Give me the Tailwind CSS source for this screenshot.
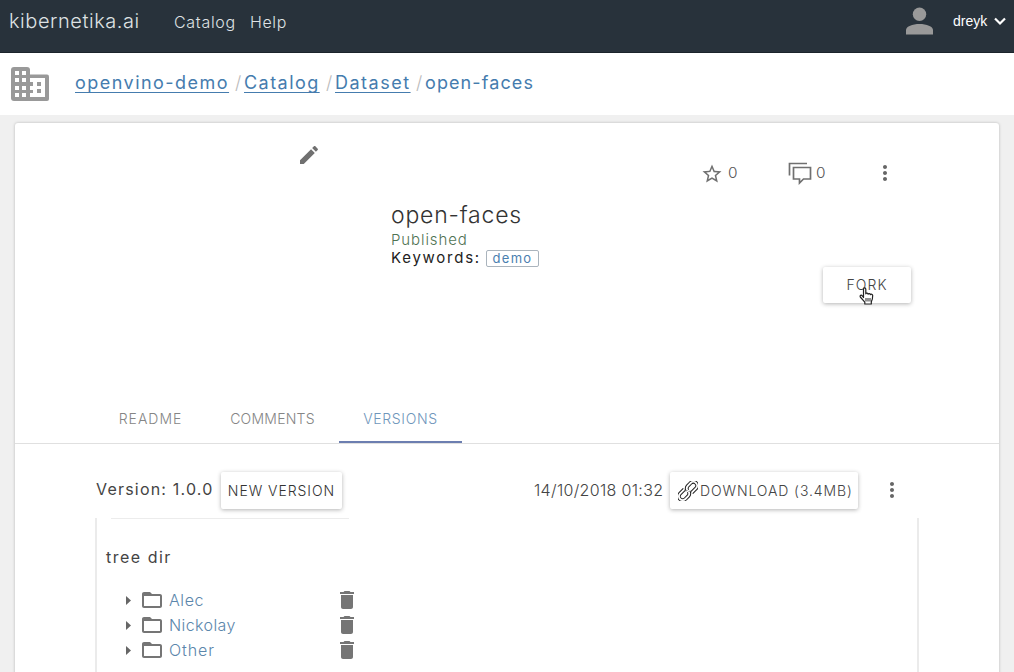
<!DOCTYPE html>
<html lang="en">
<head>
<meta charset="utf-8">
<title>kibernetika.ai</title>
<script src="https://cdn.jsdelivr.net/npm/@tailwindcss/browser@4"></script>
</head>
<body class="w-[1014px] h-[672px] overflow-hidden bg-[#f0f0f0] font-['Inter','Open_Sans',sans-serif] font-light text-[#444] whitespace-nowrap">
<svg class="hidden">
  <symbol id="dots" viewBox="0 0 24 24"><path d="M12 8c1.1 0 2-.9 2-2s-.9-2-2-2-2 .9-2 2 .9 2 2 2zm0 2c-1.1 0-2 .9-2 2s.9 2 2 2 2-.9 2-2-.9-2-2-2zm0 6c-1.1 0-2 .9-2 2s.9 2 2 2 2-.9 2-2-.9-2-2-2z"/></symbol>
  <symbol id="folder" viewBox="0 0 24 24"><path d="M20 6h-8l-2-2H4c-1.100 0-2 .9-2 2v12c0 1.100.9 2 2 2h16c1.100 0 2-.9 2-2V8c0-1.100-.9-2-2-2zm0 12H4V8h16v10z"/></symbol>
  <symbol id="trash" viewBox="0 0 24 24"><path d="M6 19c0 1.100.9 2 2 2h8c1.100 0 2-.9 2-2V7H6v12zM19 4h-3.500l-1-1h-5l-1 1H5v2h14V4z"/></symbol>
</svg>

<nav class="flex h-[53px] border-b border-[#1b242b] bg-[#28323b] text-[#dfe2e4]">
  <div class="ml-[9px] mt-[7px] w-[165px] text-[20px] leading-[28px] tracking-[0.55px]">kibernetika.ai</div>
  <div class="mt-[8px] w-[76px] text-[16px] leading-[28px] tracking-[0.7px]">Catalog</div>
  <div class="mt-[8px] text-[16px] leading-[28px] tracking-[0.6px]">Help</div>
  <div class="ml-auto flex">
    <svg class="mt-[7px] mr-[20px] h-[28px] w-[27px] fill-[#999]" viewBox="0 0 27 28"><circle cx="13.500" cy="7.300" r="6.700"/><path d="M0 27.500V23C0 19.500 6.500 17 13.500 17S27 19.500 27 23v4.500z"/></svg>
    <span class="mt-[7px] w-[41px] font-['Liberation_Sans',sans-serif] text-[14px] leading-[28px] font-normal text-white">dreyk</span>
    <svg class="mt-[17px] mr-[8px] h-[9px] w-[12px] fill-none stroke-white" viewBox="0 0 12 9" stroke-width="2.200"><path d="M1 1.500l5 5 5-5"/></svg>
  </div>
</nav>

<header class="flex h-[62px] bg-white">
  <svg class="ml-[11px] mt-[14px] h-[34px] w-[38px]" viewBox="0 0 38 34">
    <rect x="0" y="0" width="19" height="34" rx="3" fill="#999"/><rect x="14" y="7.500" width="24" height="26.500" rx="2" fill="#999"/>
    <path fill="#fff" d="M4 4h4v4H4zM11 4h4v4h-4zM4 11h4v4H4zM11 11h4v4h-4zM4 19h4v4H4zM11 19h4v4h-4zM4 26h4v4H4zM11 26h4v4h-4zM19 11h15v19H19v-4h3v-3h-3v-4h3v-4h-3z"/>
    <path fill="#999" d="M26 15h4v4h-4zM26 22h4v4h-4z"/>
  </svg>
  <div class="ml-[26px] mt-[17px] flex text-[18px] leading-[26px] font-normal text-[#457cae]">
    <a class="w-[160px] tracking-[1.47px] underline decoration-1 underline-offset-[3px] [text-decoration-skip-ink:none]">openvino-demo</a><span class="w-[9px] font-light text-[#bbb]">/</span>
    <a class="w-[82px] tracking-[1.45px] underline decoration-1 underline-offset-[3px] [text-decoration-skip-ink:none]">Catalog</a><span class="w-[9px] font-light text-[#bbb]">/</span>
    <a class="w-[81px] tracking-[1.5px] underline decoration-1 underline-offset-[3px]">Dataset</a><span class="w-[9px] font-light text-[#bbb]">/</span>
    <span class="tracking-[1.1px]">open-faces</span>
  </div>
</header>

<main class="mt-[8px] ml-[15px] h-[560px] w-[984px] rounded-t-[3px] bg-white shadow-[0_0_3px_rgba(0,0,0,0.25)]">
  <div class="flex h-[273px]">
    <div class="w-[376px] pt-[20px] pl-[282px]">
      <svg class="h-[24px] w-[24px] fill-[#707070]" viewBox="0 0 24 24"><path d="M3 17.250V21h3.750L17.810 9.940l-3.750-3.750L3 17.250zM20.710 7.040c.39-.39.39-1.020 0-1.410l-2.340-2.340c-.39-.39-1.020-.39-1.410 0l-1.830 1.830 3.750 3.750 1.830-1.830z"/></svg>
    </div>
    <div class="w-[308px] pt-[77px]">
      <h1 class="text-[23px] leading-[30px] tracking-[0.8px] text-[#333]">open-faces</h1>
      <p class="text-[15px] leading-[19px] tracking-[0.9px] text-[#4f7353]">Published</p>
      <div class="flex h-[18px] items-center text-[#222]">
        <span class="w-[95px] text-[15px] leading-[18px] font-normal tracking-[1.75px]">Keywords:</span>
        <span class="flex h-[17px] w-[53px] items-center justify-center rounded-[2px] border border-[#aab4bd] pt-[1px] text-[13px] font-normal tracking-[1.3px] text-[#4a80b0]">demo</span>
      </div>
    </div>
    <div class="w-[300px]">
      <div class="flex pt-[38px] text-[14px] leading-[24px] text-[#555]">
        <svg class="ml-[1px] h-[24px] w-[24px] fill-[#707070]" viewBox="0 0 24 24"><path transform="translate(.6 1.500) scale(.95)" d="M22 9.240l-7.190-.62L12 2 9.190 8.630 2 9.240l5.460 4.730L5.820 21 12 17.270 18.180 21l-1.630-7.030L22 9.240zM12 15.400l-3.760 2.270 1-4.280-3.320-2.880 4.380-.38L12 6.100l1.710 4.040 4.380.38-3.320 2.880 1 4.280L12 15.400z"/></svg>
        <span class="ml-[4px] w-[60px]"><span class="inline-block origin-left scale-x-110">0</span></span>
        <svg class="h-[24px] w-[24px] fill-none stroke-[#707070]" viewBox="0 0 24 24" stroke-width="1.700"><path d="M1.500 14.500V2.500H19M5.500 6.500h17v11.500h-7l-4 4v-4h-6z"/></svg>
        <span class="ml-[4px] w-[56px]"><span class="inline-block origin-left scale-x-110">0</span></span>
        <svg class="ml-[1px] h-[24px] w-[24px] fill-[#666]"><use href="#dots"/></svg>
      </div>
      <button class="relative mt-[82px] ml-[124px] block h-[36px] w-[88px] rounded-[2px] bg-white text-[14px] leading-[36px] font-light tracking-[1.1px] text-[#444] shadow-[0_1px_4px_rgba(0,0,0,0.3)]">FORK
        <svg class="absolute top-[20px] left-[36px] h-[18px] w-[16px]" viewBox="0 0 16 18"><path fill="#fff" stroke="#222" stroke-width="1.200" stroke-linejoin="round" d="M4.500 10.500V2.300c0-1.800 2.300-1.800 2.300 0v4.500c.4-1 2.200-.8 2.300.4.500-1 2.200-.7 2.300.5.700-.9 2.300-.4 2.300.9 0 3.500-.3 4.500-1.400 6.200V17H5.800v-1.900L1.300 10c-.8-1.600 1-2.400 2-1.100z"/><path stroke="#222" d="M7 11v3.500M9 11v3.500M11 11v3.500"/></svg>
      </button>
    </div>
  </div>

  <div class="flex h-[48px] border-b border-[#e0e0e0] pl-[80px] text-[14px] leading-[46px] text-[#858585]">
    <div class="w-[111px] text-center tracking-[1px]">README</div>
    <div class="w-[133px] text-center tracking-[0.25px]">COMMENTS</div>
    <div class="h-[47px] w-[123px] border-b-[2px] border-[#6c7eb0] text-center tracking-[0.65px] text-[#6f96bb]">VERSIONS</div>
  </div>

  <div class="flex pt-[28px] pl-[81px]">
    <div class="mt-[4px] w-[125px] text-[16px] leading-[26px] font-normal tracking-[1.2px] text-[#444]">Version: 1.0.0</div>
    <div class="h-[37px] w-[121px] rounded-[2px] bg-white text-center text-[14px] leading-[37px] tracking-[0.95px] text-[#333] shadow-[0_1px_4px_rgba(0,0,0,0.3)]">NEW VERSION</div>
    <div class="mt-[5px] ml-[192px] w-[136px] text-[16px] leading-[26px] tracking-[0.32px]">14/10/2018 01:32</div>
    <div class="flex h-[37px] w-[188px] items-center rounded-[2px] bg-white pl-[8px] text-[14px] leading-[37px] shadow-[0_1px_4px_rgba(0,0,0,0.3)]">
      <svg class="h-[20px] w-[20px] fill-none stroke-[#222]" viewBox="0 0 20 20"><g transform="rotate(-45 10 10)" stroke-width="3.800"><path d="M10.500 6.200H4.500a3.800 3.800 0 0 0 0 7.600H8.500a3.800 3.800 0 0 0 3.500-3" transform="translate(-2 0)"/><path d="M9.500 13.800h6a3.800 3.800 0 0 0 0-7.600h-4a3.800 3.800 0 0 0-3.500 3" transform="translate(2 0)"/><g stroke="#fff" stroke-width="1.800"><path d="M10.500 6.200H4.500a3.800 3.800 0 0 0 0 7.600H8.500a3.800 3.800 0 0 0 3.500-3" transform="translate(-2 0)"/><path d="M9.500 13.800h6a3.800 3.800 0 0 0 0-7.600h-4a3.800 3.800 0 0 0-3.500 3" transform="translate(2 0)"/></g></g></svg>
      <span class="ml-[2px] tracking-[0.9px]">DOWNLOAD (3.4MB)</span>
    </div>
    <svg class="mt-[6px] ml-[22px] h-[24px] w-[24px] fill-[#666]"><use href="#dots"/></svg>
  </div>

  <div class="mt-[9px] ml-[80px] h-[160px] w-[824px] border-x-2 border-[#ebebeb] pl-[9px]">
    <div class="ml-[5px] h-px w-[238px] bg-[#ececec]"></div>
    <h2 class="mt-[25px] h-[43px] text-[16px] leading-[26px] font-normal tracking-[1.5px] text-[#444]">tree dir</h2>
    <ul class="text-[16px] leading-[27px] text-[#5b86ab]">
      <li class="flex h-[25px] items-center pl-[20px]"><svg class="mt-[1px] h-[9px] w-[5px] fill-[#666]" viewBox="0 0 5 9"><path d="M0 0l5 4.500L0 9z"/></svg><svg class="ml-[9px] h-[24px] w-[24px] fill-[#757575]"><use href="#folder"/></svg><span class="ml-[5px] w-[166px] pt-[2px] tracking-[0.6px]">Alec</span><svg class="h-[24px] w-[24px] fill-[#757575]"><use href="#trash"/></svg></li>
      <li class="flex h-[25px] items-center pl-[20px]"><svg class="mt-[1px] h-[9px] w-[5px] fill-[#666]" viewBox="0 0 5 9"><path d="M0 0l5 4.500L0 9z"/></svg><svg class="ml-[9px] h-[24px] w-[24px] fill-[#757575]"><use href="#folder"/></svg><span class="ml-[5px] w-[166px] pt-[2px] tracking-[0.4px]">Nickolay</span><svg class="h-[24px] w-[24px] fill-[#757575]"><use href="#trash"/></svg></li>
      <li class="flex h-[25px] items-center pl-[20px]"><svg class="mt-[1px] h-[9px] w-[5px] fill-[#666]" viewBox="0 0 5 9"><path d="M0 0l5 4.500L0 9z"/></svg><svg class="ml-[9px] h-[24px] w-[24px] fill-[#757575]"><use href="#folder"/></svg><span class="ml-[5px] w-[166px] pt-[2px] tracking-[0.9px]">Other</span><svg class="h-[24px] w-[24px] fill-[#757575]"><use href="#trash"/></svg></li>
    </ul>
  </div>
</main>
</body>
</html>
